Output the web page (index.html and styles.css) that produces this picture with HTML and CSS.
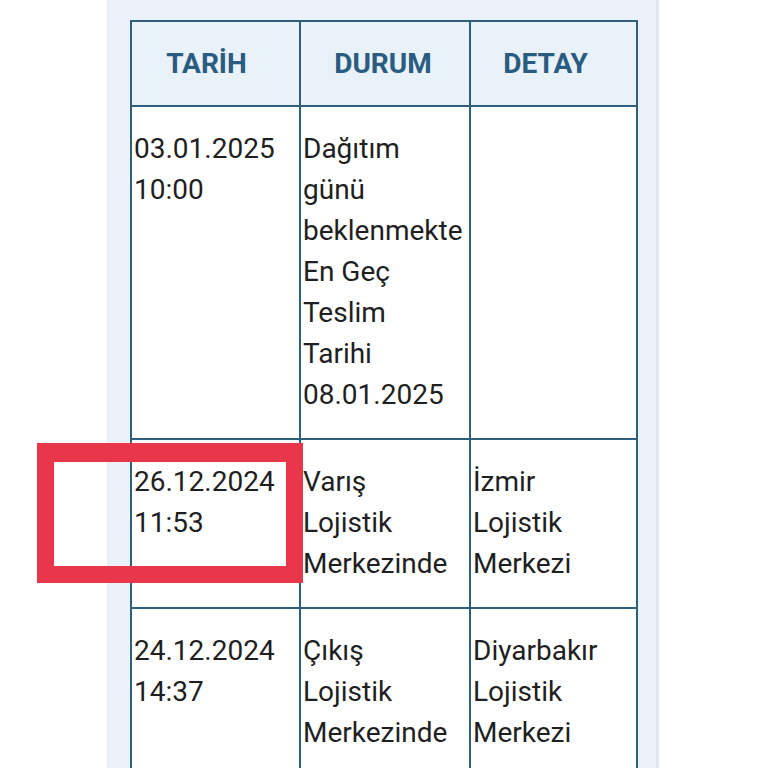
FILE: index.html
```html
<!DOCTYPE html>
<html lang="tr">
<head>
<meta charset="utf-8">
<link rel="stylesheet" href="styles.css">
</head>
<body>
<div class="panel">
  <table class="track">
    <thead>
      <tr>
        <th class="c1">TARİH</th>
        <th class="c2">DURUM</th>
        <th class="c3">DETAY</th>
      </tr>
    </thead>
    <tbody>
      <tr>
        <td>03.01.2025<br>10:00</td>
        <td>Dağıtım<br>günü<br>beklenmekte<br>En Geç<br>Teslim<br>Tarihi<br>08.01.2025</td>
        <td></td>
      </tr>
      <tr>
        <td>26.12.2024<br>11:53</td>
        <td>Varış<br>Lojistik<br>Merkezinde</td>
        <td>İzmir<br>Lojistik<br>Merkezi</td>
      </tr>
      <tr>
        <td>24.12.2024<br>14:37</td>
        <td>Çıkış<br>Lojistik<br>Merkezinde</td>
        <td>Diyarbakır<br>Lojistik<br>Merkezi</td>
      </tr>
    </tbody>
  </table>
</div>
<div class="highlight"></div>
</body>
</html>
```
FILE: styles.css
```css
html, body {
  margin: 0;
  padding: 0;
  background: #ffffff;
  height: 768px;
  overflow: hidden;
}
body {
  font-family: Roboto, "Liberation Sans", sans-serif;
  position: relative;
}
.panel {
  margin-left: 107px;
  width: 526px;
  min-height: 900px;
  background: #eaf1f8;
  border-left: 1px solid #e2e9f0;
  border-right: 3px solid #dfe6ee;
  padding: 20px 0 0 22px;
  box-sizing: content-box;
}
.track {
  border-collapse: separate;
  border-spacing: 0;
  table-layout: fixed;
  width: 508px;
  border-top: 2px solid #2e5f7b;
  border-left: 2px solid #2e5f7b;
}
.track th, .track td {
  box-sizing: border-box;
  border-right: 2px solid #2e5f7b;
  border-bottom: 2px solid #2e5f7b;
  vertical-align: top;
  font-size: 28px;
  line-height: 41px;
}
.track th {
  background: #e9f1f9;
  color: #2a5b80;
  font-weight: 700;
  text-align: center;
  padding: 21px 0 21px 0;
}
.track th.c1 { width: 169px; padding-right: 18px; }
.track th.c2 { width: 170px; padding-right: 4px; }
.track th.c3 { width: 167px; padding-right: 16px; }
.track td {
  background: #ffffff;
  color: #1f1f1f;
  padding: 21px 0 23px 2px;
  white-space: nowrap;
}
.highlight {
  position: absolute;
  left: 37px;
  top: 443px;
  width: 266px;
  height: 140px;
  box-sizing: border-box;
  border: 17px solid #e8374a;
  border-top-width: 19px;
}
```
